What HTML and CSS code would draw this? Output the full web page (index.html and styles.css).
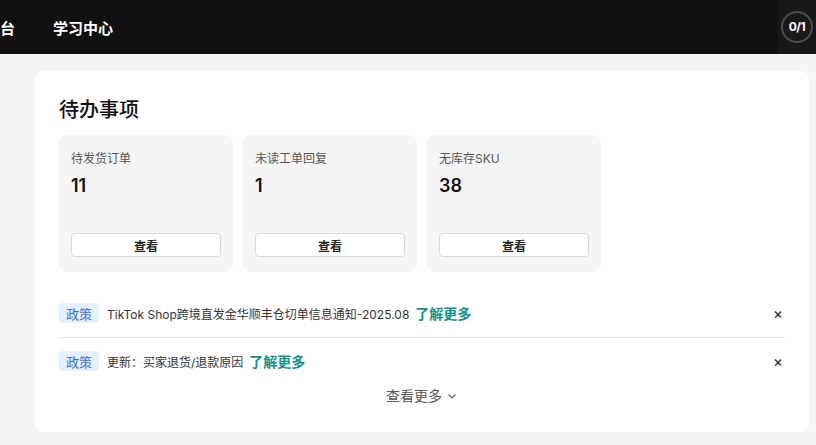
FILE: index.html
```html
<!DOCTYPE html>
<html lang="zh">
<head>
<meta charset="utf-8">
<link rel="stylesheet" href="styles.css">
</head>
<body>
<header class="topbar">
  <div class="nav">
    <span class="nav-item cut">台</span>
    <span class="nav-item">学习中心</span>
  </div>
  <div class="progress-wrap"><div class="progress">0/1</div></div>
</header>
<main class="main">
  <section class="panel">
    <h2 class="title">待办事项</h2>
    <div class="todos">
      <div class="todo">
        <div class="todo-label">待发货订单</div>
        <div class="todo-num">11</div>
        <button class="todo-btn">查看</button>
      </div>
      <div class="todo">
        <div class="todo-label">未读工单回复</div>
        <div class="todo-num">1</div>
        <button class="todo-btn">查看</button>
      </div>
      <div class="todo">
        <div class="todo-label">无库存SKU</div>
        <div class="todo-num">38</div>
        <button class="todo-btn">查看</button>
      </div>
    </div>
    <div class="notices">
      <div class="notice">
        <span class="tag">政策</span>
        <span class="notice-text">TikTok Shop跨境直发金华顺丰仓切单信息通知-2025.08</span>
        <a class="more">了解更多</a>
        <span class="close">×</span>
      </div>
      <div class="notice">
        <span class="tag">政策</span>
        <span class="notice-text">更新：买家退货/退款原因</span>
        <a class="more">了解更多</a>
        <span class="close">×</span>
      </div>
    </div>
    <div class="see-more">查看更多
      <svg class="chev" width="12" height="12" viewBox="0 0 12 12"><path d="M2.5 4.5 L6 8 L9.5 4.5" fill="none" stroke="#666" stroke-width="1.2"/></svg>
    </div>
  </section>
</main>
</body>
</html>
```
FILE: styles.css
```css
* { box-sizing: border-box; }
body {
  margin: 0;
  background: #f5f5f5;
  font-family: "Inter", "Noto Sans CJK SC", sans-serif;
  color: #222;
}
.topbar {
  height: 54px;
  background: #111;
  display: flex;
  align-items: center;
  justify-content: space-between;
}
.nav { display: flex; align-items: center; gap: 38px; }
.nav-item {
  color: #fff;
  font-size: 15px;
  font-weight: 700;
  font-family: "Noto Sans CJK SC", sans-serif;
}
.progress-wrap {
  height: 54px;
  width: 38px;
  background: #181818;
  display: flex;
  align-items: center;
  justify-content: flex-start;
  padding-bottom: 1px;
}
.progress {
  width: 32px;
  height: 32px;
  border-radius: 50%;
  border: 2px solid #4a4f4c;
  background: #1a1a1a;
  color: #fff;
  font-size: 12px;
  font-weight: 700;
  display: flex;
  align-items: center;
  justify-content: center;
  letter-spacing: -0.5px;
  margin-left: 3px;
}
.main { padding: 17px 7px 0 35px; }
.panel {
  background: #fff;
  border-radius: 8px;
  padding: 24px 24px 26px 24px;
}
.title {
  margin: 0;
  font-size: 20px;
  line-height: 28px;
  font-weight: 500;
  color: #111;
  font-family: "Noto Sans CJK SC", sans-serif;
}
.todos {
  margin-top: 12px;
  display: flex;
  gap: 10px;
}
.todo {
  width: 174px;
  height: 137px;
  background: #f5f5f5;
  border-radius: 8px;
  padding: 15px 12px 15px 12px;
  display: flex;
  flex-direction: column;
}
.todo-label {
  font-size: 12px;
  line-height: 18px;
  color: #555;
}
.todo-num {
  margin-top: 6px;
  font-size: 18px;
  line-height: 24px;
  font-weight: 600;
  color: #111;
}
.todo-btn {
  margin-top: auto;
  height: 24px;
  width: 150px;
  background: #fff;
  border: 1px solid #d9d9d9;
  border-radius: 4px;
  font-family: "Noto Sans CJK SC", sans-serif;
  font-size: 12px;
  font-weight: 700;
  color: #222;
  padding: 0;
}
.notices { margin-top: 17px; }
.notice {
  height: 48px;
  display: flex;
  align-items: center;
}
.notice + .notice {
  border-top: 1px solid #e5e5e5;
  height: 47px;
}
.tag {
  width: 40px;
  height: 20px;
  border-radius: 4px;
  background: #e6f0fe;
  color: #3d72d6;
  font-size: 13px;
  display: flex;
  align-items: center;
  justify-content: center;
  margin-right: 8px;
}
.notice-text {
  font-size: 12px;
  color: #333;
}
.more {
  margin-left: 6px;
  color: #11928c;
  font-size: 14px;
  font-weight: 700;
}
.close {
  margin-left: auto;
  font-size: 15px;
  color: #222;
  margin-right: 2px;
}
.see-more {
  margin-top: 2px;
  text-align: center;
  font-size: 14px;
  line-height: 20px;
  color: #555;
  display: flex;
  justify-content: center;
  align-items: center;
  gap: 4px;
}
```
